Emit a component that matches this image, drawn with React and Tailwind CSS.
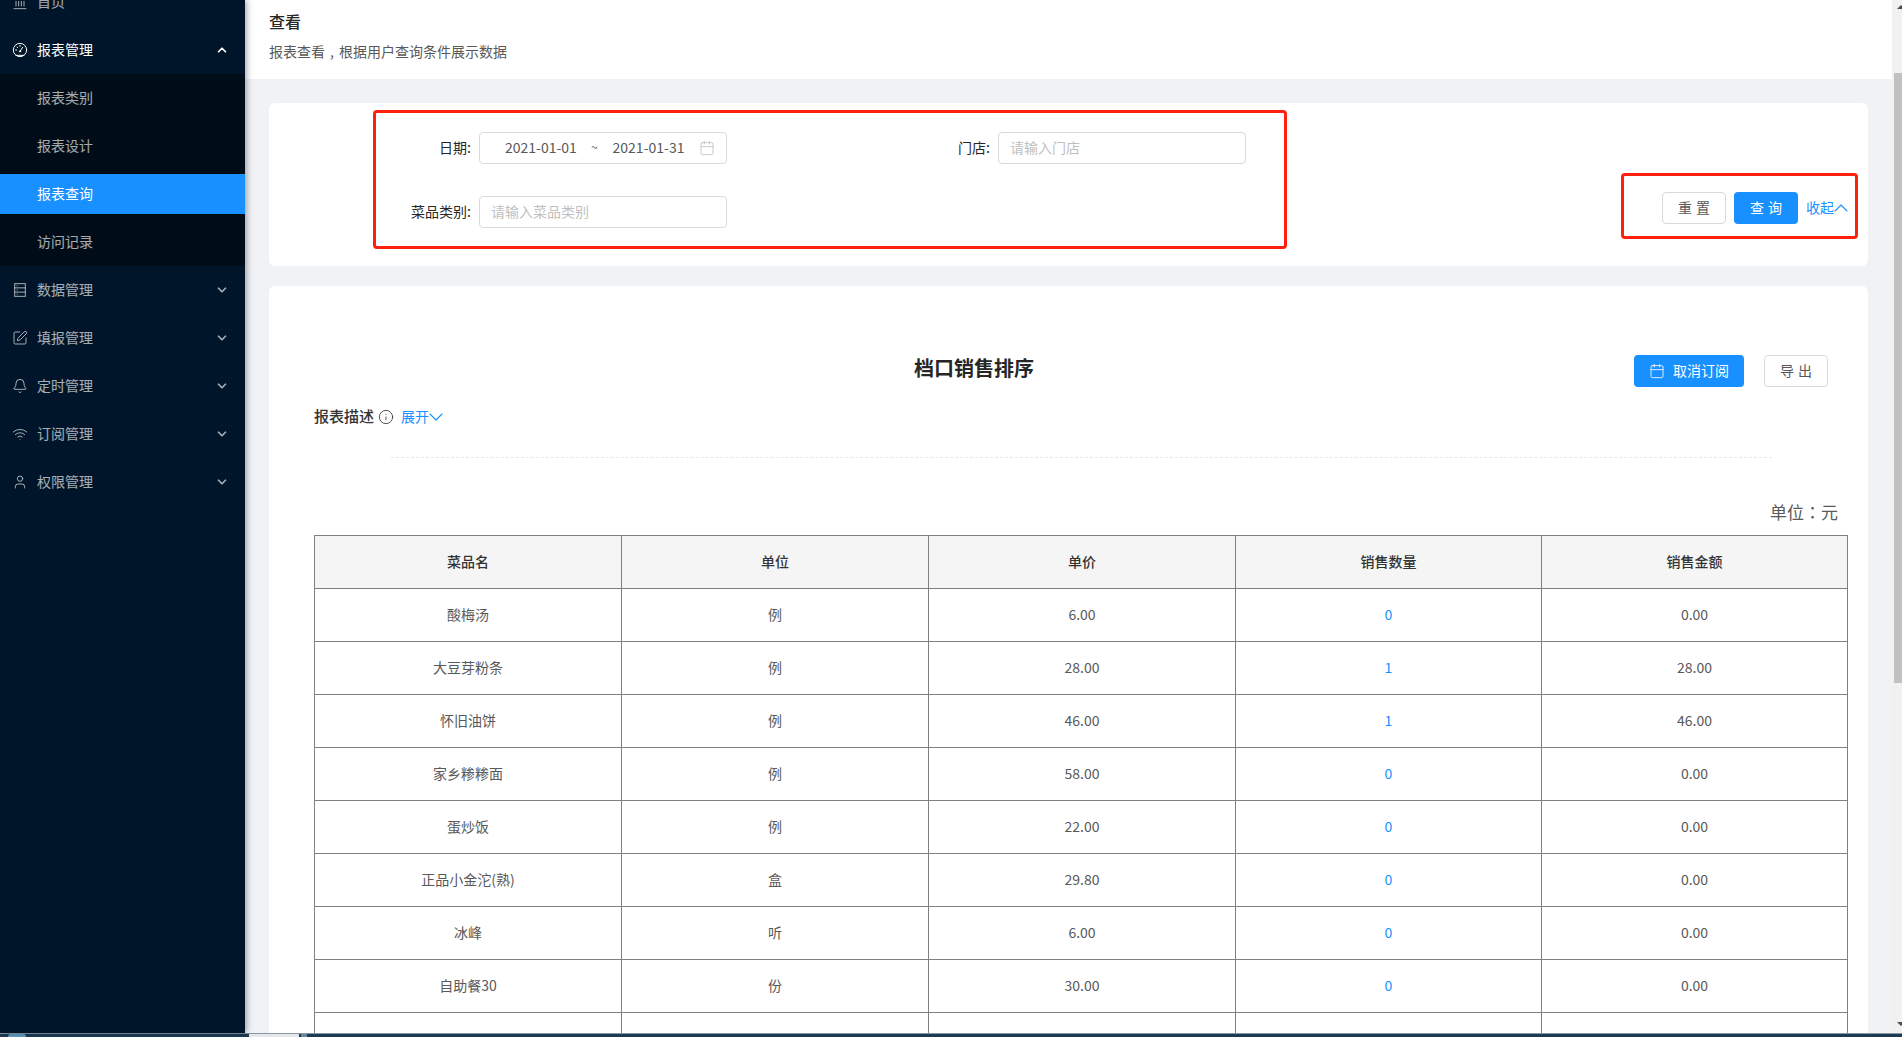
import { Calendar, ChevronDown, ChevronUp, Info, Landmark, SquarePen, Bell, Wifi, User } from 'lucide-react';

const FONT = "font-['Noto_Sans_CJK_SC','Noto_Sans',sans-serif]";

function GaugeIcon(props) {
  return (
    <svg viewBox="0 0 24 24" width="16" height="16" fill="none" stroke="currentColor" strokeWidth="1.5" strokeLinecap="round" {...props}>
      <circle cx="12" cy="12" r="10" />
      <path d="M6 20h12" />
      <path d="M12 14l4-6" />
      <path d="M5.5 12h1.5M12 5v1.5M7.5 7.5l1 1" />
      <circle cx="12" cy="14" r="1" />
    </svg>
  );
}

function DatabaseIcon(props) {
  return (
    <svg viewBox="0 0 24 24" width="16" height="16" fill="none" stroke="currentColor" strokeWidth="1.5" {...props}>
      <rect x="4" y="2.5" width="16" height="19" />
      <path d="M4 8.8h16M4 15.2h16" />
      <path d="M7 5.6h1.5M7 12h1.5M7 18.4h1.5" />
    </svg>
  );
}

const SUB_MENU = ['报表类别', '报表设计', '报表查询', '访问记录'];

const NAV_BELOW = [
  { label: '数据管理', icon: DatabaseIcon },
  { label: '填报管理', icon: SquarePen },
  { label: '定时管理', icon: Bell },
  { label: '订阅管理', icon: Wifi },
  { label: '权限管理', icon: User },
];

const COLUMNS = ['菜品名', '单位', '单价', '销售数量', '销售金额'];

const ROWS = [
  ['酸梅汤', '例', '6.00', '0', '0.00'],
  ['大豆芽粉条', '例', '28.00', '1', '28.00'],
  ['怀旧油饼', '例', '46.00', '1', '46.00'],
  ['家乡糁糁面', '例', '58.00', '0', '0.00'],
  ['蛋炒饭', '例', '22.00', '0', '0.00'],
  ['正品小金沱(熟)', '盒', '29.80', '0', '0.00'],
  ['冰峰', '听', '6.00', '0', '0.00'],
  ['自助餐30', '份', '30.00', '0', '0.00'],
  ['', '', '', '', ''],
];

function NavItem({ label, icon: Icon, open }) {
  return (
    <div className={`flex items-center h-12 pl-[12px] pr-[16px] text-sm ${open ? 'text-white' : 'text-white/65'}`}>
      <Icon size={16} width={16} height={16} strokeWidth={1.5} className="shrink-0" />
      <span className="ml-[9px] flex-1 pb-[2px]">{label}</span>
      {open ? <ChevronUp size={14} strokeWidth={3} /> : <ChevronDown size={14} strokeWidth={3} />}
    </div>
  );
}

function Sidebar() {
  return (
    <aside className="w-[245px] shrink-0 bg-[#001529] overflow-hidden relative z-10 shadow-[2px_0_6px_rgba(0,21,41,0.35)]">
      <div className="-mt-[22px]">
        <div className="flex items-center h-12 pl-[12px] text-sm text-white/65">
          <Landmark size={16} strokeWidth={1.5} />
          <span className="ml-[9px] pb-[2px]">首页</span>
        </div>
        <NavItem label="报表管理" icon={GaugeIcon} open />
        <div className="bg-[#000c17] py-1 flex flex-col gap-2">
          {SUB_MENU.map((item) => (
            <div
              key={item}
              className={`h-10 flex items-center pl-[37px] pb-[2px] text-sm ${item === '报表查询' ? 'bg-[#1890ff] text-white' : 'text-white/65'}`}
            >
              {item}
            </div>
          ))}
        </div>
        {NAV_BELOW.map((item) => (
          <NavItem key={item.label} {...item} />
        ))}
      </div>
    </aside>
  );
}

function Field({ label, children, labelWidth }) {
  return (
    <div className="flex items-center h-8">
      <label className={`text-sm text-[#262626] text-right pr-2 pb-[2px] ${labelWidth}`}>{label}:</label>
      {children}
    </div>
  );
}

function TextInput({ placeholder }) {
  return (
    <div className="w-[248px] h-8 border border-[#d9d9d9] rounded px-[11px] pb-[2px] flex items-center text-sm text-[#bfbfbf]">
      {placeholder}
    </div>
  );
}

function FilterCard() {
  return (
    <section className="h-[163px] bg-white rounded-md flex justify-between">
      <div className="ml-[104px] mt-[7px] w-[914px] h-[139px] border-[3px] border-[#ff2010] rounded-sm pt-[19px] flex flex-col gap-8">
        <div className="flex">
          <Field label="日期" labelWidth="w-[103px]">
            <div className="w-[248px] h-8 border border-[#d9d9d9] rounded flex items-center pl-[25px] pr-[11px] text-sm text-[#595959]">
              <span className="pb-[2px]">2021-01-01</span>
              <span className="ml-[14px] pb-[2px] text-xs">~</span>
              <span className="ml-[15px] pb-[2px] flex-1">2021-01-31</span>
              <Calendar size={16} strokeWidth={1.25} className="text-[#bfbfbf]" />
            </div>
          </Field>
          <div className="ml-[183px]">
            <Field label="门店" labelWidth="w-[88px]">
              <TextInput placeholder="请输入门店" />
            </Field>
          </div>
        </div>
        <Field label="菜品类别" labelWidth="w-[103px]">
          <TextInput placeholder="请输入菜品类别" />
        </Field>
      </div>
      <div className="mr-[10px] mt-[70px] w-[237px] h-[66px] border-[3px] border-[#ff2010] rounded-sm flex items-center pl-[38px] pt-1 gap-2">
        <button className="w-16 h-8 pb-[2px] pl-[4px] border border-[#d9d9d9] rounded text-sm text-[#595959] tracking-[4px]">重置</button>
        <button className="w-16 h-8 pb-[2px] pl-[4px] rounded bg-[#1890ff] text-sm text-white tracking-[4px]">查询</button>
        <span className="flex items-center text-sm text-[#1890ff]">
          <span className="pb-[2px]">收起</span>
          <ChevronUp size={24} strokeWidth={1.1} className="-ml-[5px]" />
        </span>
      </div>
    </section>
  );
}

function ReportTable() {
  return (
    <table className="w-[1533px] table-fixed border-collapse text-sm text-[#595959]">
      <colgroup>
        <col className="w-[307px]" />
        <col className="w-[307px]" />
        <col className="w-[307px]" />
        <col className="w-[306px]" />
        <col className="w-[306px]" />
      </colgroup>
      <thead>
        <tr className="h-[53px] bg-[#f5f5f5]">
          {COLUMNS.map((col) => (
            <th key={col} className="border border-[#808080] pb-[2px] font-medium text-[#333333]">{col}</th>
          ))}
        </tr>
      </thead>
      <tbody>
        {ROWS.map((row, i) => (
          <tr key={i} className="h-[53px]">
            {row.map((cell, j) => (
              <td key={j} className={`border border-[#808080] pb-[2px] text-center ${j === 3 ? 'text-[#1890ff]' : ''}`}>{cell}</td>
            ))}
          </tr>
        ))}
      </tbody>
    </table>
  );
}

function ReportCard() {
  return (
    <section className="flex-1 bg-white rounded-t-md mt-5 pl-[45px] pr-5 overflow-hidden">
      <div className="relative flex justify-end gap-5 pt-[69px] pr-5 h-[101px]">
        <h1 className="absolute left-0 right-[214px] top-[67px] text-center text-xl font-bold leading-[30px] text-[#262626]">档口销售排序</h1>
        <button className="w-[110px] h-8 rounded bg-[#1890ff] text-white text-sm flex items-center justify-center gap-2">
          <Calendar size={16} strokeWidth={1.25} />
          <span className="pb-[2px]">取消订阅</span>
        </button>
        <button className="w-16 h-8 pb-[2px] pl-[4px] border border-[#d9d9d9] rounded text-sm text-[#595959] tracking-[4px]">导出</button>
      </div>
      <div className="flex items-center h-5 mt-5 text-sm">
        <span className="text-[15px] font-medium text-[#333333] pb-[2px]">报表描述</span>
        <Info size={16} strokeWidth={1.25} className="ml-[4px] text-[#333333]" />
        <span className="ml-[7px] flex items-center text-[#1890ff]">
          <span className="pb-[2px]">展开</span>
          <ChevronDown size={24} strokeWidth={1.1} className="-ml-[5px]" />
        </span>
      </div>
      <div className="ml-[77px] mr-[76px] mt-[30px] border-t border-dashed border-[#e8e8e8]" />
      <div className="flex justify-end pr-[10px] mt-[42px] mb-[11px] text-[17px] leading-6 text-[#595959]">
        单位<span className="font-['Noto_Sans_CJK_TC',sans-serif]">：</span>元
      </div>
      <ReportTable />
    </section>
  );
}

function ScrollBar() {
  return (
    <div className="w-[10px] shrink-0 bg-[#f1f1f1] flex flex-col">
      <svg viewBox="0 0 8 4" width="8" height="4" className="ml-[5px] mt-[5px] shrink-0 fill-[#505050]">
        <path d="M4 0l4 4H0z" />
      </svg>
      <div className="ml-[2px] mt-[64px] h-[610px] bg-[#c1c1c1]" />
      <div className="flex-1" />
      <svg viewBox="0 0 8 4" width="8" height="4" className="ml-[5px] mb-[7px] shrink-0 fill-[#505050]">
        <path d="M0 0h8L4 4z" />
      </svg>
    </div>
  );
}

function TaskBar() {
  return (
    <div className="h-1 shrink-0 flex bg-[#1c3a52] border-t border-[#8a97a3]">
      <div className="ml-[8px] w-[18px] h-[3px] rounded-t-full bg-[#5f9cc4]" />
      <div className="ml-[223px] w-[50px] h-[3px] bg-[#e4e8ec]" />
      <div className="ml-[2px] w-[6px] h-[3px] bg-[#6f8496]" />
    </div>
  );
}

export default function App() {
  return (
    <div className={`h-[1037px] flex flex-col overflow-hidden ${FONT}`}>
      <div className="flex-1 flex min-h-0">
        <Sidebar />
        <div className="flex-1 flex min-w-0 bg-[#f0f2f5]">
          <main className="flex-1 flex flex-col min-w-0">
            <header className="h-[79px] shrink-0 bg-white pl-[24px] pt-[9px]">
              <h2 className="text-base leading-6 font-medium text-[#262626]">查看</h2>
              <p className="mt-[6px] text-sm leading-6 text-[#595959]">
                报表查看<span className="inline-block w-[14px] text-center">,</span>根据用户查询条件展示数据
              </p>
            </header>
            <div className="flex-1 flex flex-col min-h-0 pt-6 pl-6 pr-6">
              <FilterCard />
              <ReportCard />
            </div>
          </main>
          <ScrollBar />
        </div>
      </div>
      <TaskBar />
    </div>
  );
}
